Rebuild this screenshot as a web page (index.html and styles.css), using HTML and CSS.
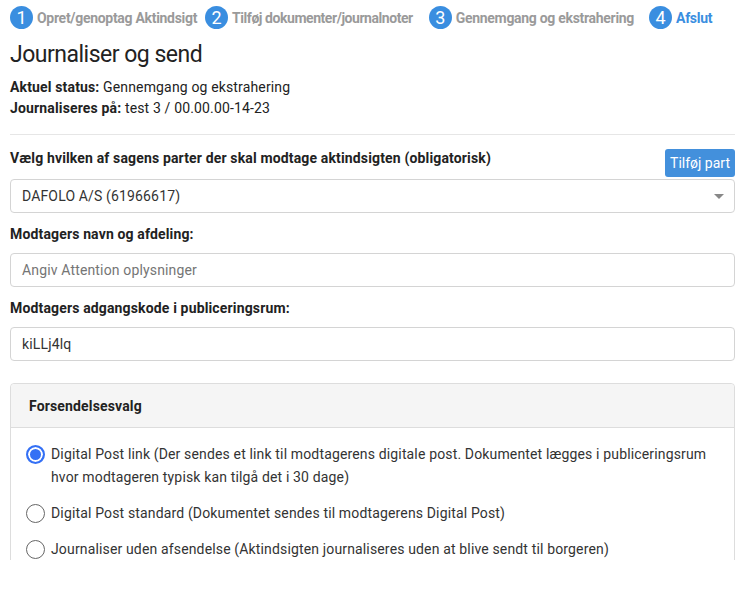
FILE: index.html
```html
<!DOCTYPE html>
<html lang="da">
<head>
    <meta charset="UTF-8">
    <title>Journaliser og send</title>
    <link rel="stylesheet" href="styles.css">
</head>
<body>
    <div class="page">
        <div class="steps">
            <div class="step"><span class="num">1</span>Opret/genoptag Aktindsigt</div>
            <div class="step"><span class="num">2</span>Tilføj dokumenter/journalnoter</div>
            <div class="step"><span class="num">3</span>Gennemgang og ekstrahering</div>
            <div class="step active"><span class="num">4</span>Afslut</div>
        </div>

        <h1 class="title">Journaliser og send</h1>
        <div class="info"><b>Aktuel status:</b> Gennemgang og ekstrahering</div>
        <div class="info"><b>Journaliseres på:</b> test 3 / 00.00.00-14-23</div>
        <hr class="sep">

        <div class="party-row">
            <label class="lbl">Vælg hvilken af sagens parter der skal modtage aktindsigten (obligatorisk)</label>
            <button class="btn">Tilføj part</button>
        </div>
        <div class="field select">
            <span>DAFOLO A/S (61966617)</span>
            <span class="caret"></span>
        </div>

        <label class="lbl">Modtagers navn og afdeling:</label>
        <div class="field placeholder">Angiv Attention oplysninger</div>

        <label class="lbl">Modtagers adgangskode i publiceringsrum:</label>
        <div class="field">kiLLj4lq</div>

        <div class="panel">
            <div class="panel-head">Forsendelsesvalg</div>
            <div class="panel-body">
                <div class="opt"><span class="radio checked"></span><span>Digital Post link (Der sendes et link til modtagerens digitale post. Dokumentet lægges i publiceringsrum hvor modtageren typisk kan tilgå det i 30 dage)</span></div>
                <div class="opt"><span class="radio"></span><span>Digital Post standard (Dokumentet sendes til modtagerens Digital Post)</span></div>
                <div class="opt"><span class="radio"></span><span>Journaliser uden afsendelse (Aktindsigten journaliseres uden at blive sendt til borgeren)</span></div>
            </div>
        </div>
    </div>
</body>
</html>
```

FILE: styles.css
```css
* {
    box-sizing: border-box;
}
body {
    margin: 0;
    font-family: Roboto, "Liberation Sans", sans-serif;
    font-size: 14px;
    letter-spacing: 0.15px;
    color: #222;
    background: #fff;
}
.page {
    padding: 0 11px 0 10px;
    height: 560px;
    overflow: hidden;
}

.steps {
    display: flex;
    height: 35px;
    align-items: center;
}
.step {
    display: flex;
    align-items: center;
    font-weight: 700;
    color: #9a9a9a;
    margin-right: 8px;
    letter-spacing: -0.3px;
}
.step:nth-child(2) {
    letter-spacing: -0.45px;
}
.step:nth-child(3) {
    margin-left: 8px;
    margin-right: 15px;
}
.num {
    width: 23px;
    height: 23px;
    border-radius: 50%;
    background: #3a8ee0;
    color: #fff;
    font-weight: 400;
    font-size: 18px;
    display: flex;
    align-items: center;
    justify-content: center;
    margin-right: 4px;
    letter-spacing: 0;
}
.step.active {
    color: #3a8ee0;
}

.title {
    font-size: 23px;
    letter-spacing: -0.5px;
    font-weight: 400;
    line-height: 30px;
    margin: 5px 0 7px;
    color: #222;
}
.info {
    line-height: 21px;
}
.sep {
    border: 0;
    border-top: 1px solid #e6e6e6;
    margin: 15px 0 13px;
}

.party-row {
    display: flex;
    justify-content: space-between;
    align-items: flex-start;
    height: 31px;
}
.lbl {
    display: block;
    font-weight: 700;
    line-height: 20px;
}
.btn {
    margin-top: 1px;
    height: 28px;
    width: 70px;
    padding: 0;
    border: 0;
    border-radius: 3px;
    background: #4390dc;
    color: #fff;
    font-family: inherit;
    font-size: 14px;
}
.field {
    height: 34px;
    border: 1px solid #d4d4d4;
    border-radius: 4px;
    padding: 0 11px;
    display: flex;
    align-items: center;
    color: #333;
    margin-bottom: 11px;
}
.lbl + .field {
    margin-top: 9px;
}
.select {
    justify-content: space-between;
}
.caret {
    width: 0;
    height: 0;
    border-left: 5px solid transparent;
    border-right: 5px solid transparent;
    border-top: 5px solid #888;
    margin-right: -1px;
}
.placeholder {
    color: #757575;
}

.panel {
    margin-top: 22px;
    border: 1px solid #ddd;
    border-radius: 4px;
}
.panel-head {
    height: 44px;
    background: #f5f5f5;
    border-bottom: 1px solid #ddd;
    padding-left: 18px;
    display: flex;
    align-items: center;
    font-weight: 700;
    border-radius: 4px 4px 0 0;
}
.panel-body {
    padding: 15px 15px 10px 15px;
}
.opt {
    display: flex;
    align-items: flex-start;
    line-height: 23px;
    color: #333;
    margin-bottom: 13px;
}
.radio {
    flex: none;
    width: 19px;
    height: 19px;
    border: 1.5px solid #666;
    border-radius: 50%;
    margin: 2px 6px 0 0;
    background: #fff;
}
.radio.checked {
    border: 2px solid #3470f5;
    box-shadow: inset 0 0 0 2px #fff;
    background: #3470f5;
}
```
